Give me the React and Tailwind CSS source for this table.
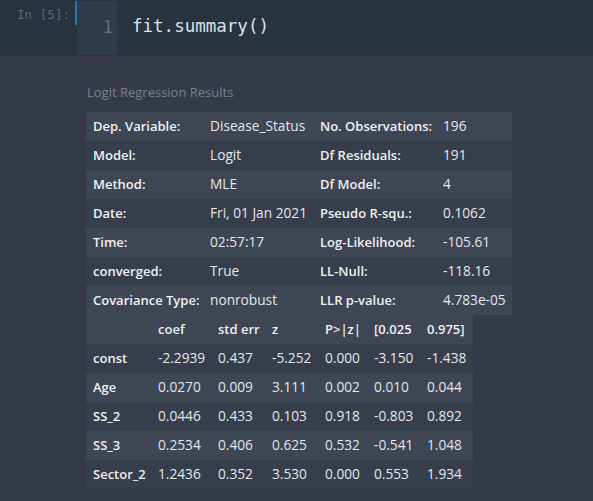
import React from "react";

const info = [
  ["Dep. Variable:", "Disease_Status", "No. Observations:", "196"],
  ["Model:", "Logit", "Df Residuals:", "191"],
  ["Method:", "MLE", "Df Model:", "4"],
  ["Date:", "Fri, 01 Jan 2021", "Pseudo R-squ.:", "0.1062"],
  ["Time:", "02:57:17", "Log-Likelihood:", "-105.61"],
  ["converged:", "True", "LL-Null:", "-118.16"],
  ["Covariance Type:", "nonrobust", "LLR p-value:", "4.783e-05"],
];

const coefs = [
  ["const", "-2.2939", "0.437", "-5.252", "0.000", "-3.150", "-1.438"],
  ["Age", "0.0270", "0.009", "3.111", "0.002", "0.010", "0.044"],
  ["SS_2", "0.0446", "0.433", "0.103", "0.918", "-0.803", "0.892"],
  ["SS_3", "0.2534", "0.406", "0.625", "0.532", "-0.541", "1.048"],
  ["Sector_2", "1.2436", "0.352", "3.530", "0.000", "0.553", "1.934"],
];

const heads = ["", "coef", "std err", "z", "P>|z|", "[0.025", "0.975]"];
const w2 = ["w-[65px]", "w-[60px]", "w-[54px]", "w-[53px]", "w-[49px]", "w-[53px]", "w-[53px]"];
const w1 = ["w-[117px]", "w-[110px]", "w-[123px]", "w-[76px]"];

export default function App() {
  return (
    <div className="w-[593px] h-[501px] bg-[#343a47] overflow-hidden" style={{ fontFamily: '"Open Sans", "Noto Sans", sans-serif' }}>
      {/* code cell */}
      <div className="h-[56px] bg-[#29333f] flex">
        <div className="w-[75px] pl-[17px] pt-[5px] text-[12.6px] text-[#5d6877] leading-[20px]" style={{ fontFamily: '"DejaVu Sans Mono", monospace' }}>
          In [5]:
        </div>
        <div className="w-[2px] h-[24px] mt-[1px] bg-[#1f7ea8]" />
        <div className="w-[41px] h-[54px] mt-[1px] bg-[#2f3b4a] text-right pr-[5px] pt-[14px] text-[17.5px] leading-[24px] text-[#5e6d82]" style={{ fontFamily: '"DejaVu Sans Mono", monospace' }}>
          1
        </div>
        <div className="pl-[14px] pt-[14px] text-[17.5px] leading-[24px] text-[#dbe1e8]" style={{ fontFamily: '"DejaVu Sans Mono", monospace' }}>
          fit.summary()
        </div>
      </div>

      {/* output */}
      <div className="pl-[86px] pt-[26px]">
        <div className="h-[30px] pl-[1px] text-[13px] leading-[20px] text-[#7a808a]">Logit Regression Results</div>
        <table className="border-collapse text-[13.7px] text-[#e3e7ec] table-fixed">
          <tbody>
            {info.map((r, i) => (
              <tr key={i} className={i % 2 === 0 ? "h-[29px] bg-[#3e4553]" : "h-[29px] bg-[#373e4b]"}>
                {r.map((c, j) => (
                  <td key={j} className={`${w1[j]} pl-[7px] p-0 whitespace-nowrap ${j % 2 === 0 ? "font-semibold text-[13px] text-[#eef0f3]" : ""}`}>
                    {c}
                  </td>
                ))}
              </tr>
            ))}
          </tbody>
        </table>
        <table className="border-collapse text-[13.7px] text-[#e3e7ec] table-fixed">
          <tbody>
            <tr className="h-[29px] bg-[#3e4553]">
              {heads.map((h, j) => (
                <td key={j} className={`${w2[j]} pl-[7px] p-0 whitespace-nowrap font-semibold text-[13px] text-[#eef0f3]`}>{h}</td>
              ))}
            </tr>
            {coefs.map((r, i) => (
              <tr key={i} className={i % 2 === 0 ? "h-[29px] bg-[#373e4b]" : "h-[29px] bg-[#3e4553]"}>
                {r.map((c, j) => (
                  <td key={j} className={`${w2[j]} pl-[7px] p-0 whitespace-nowrap ${j === 0 ? "font-semibold text-[13px] text-[#eef0f3]" : ""}`}>
                    {c}
                  </td>
                ))}
              </tr>
            ))}
          </tbody>
        </table>
      </div>
    </div>
  );
}
